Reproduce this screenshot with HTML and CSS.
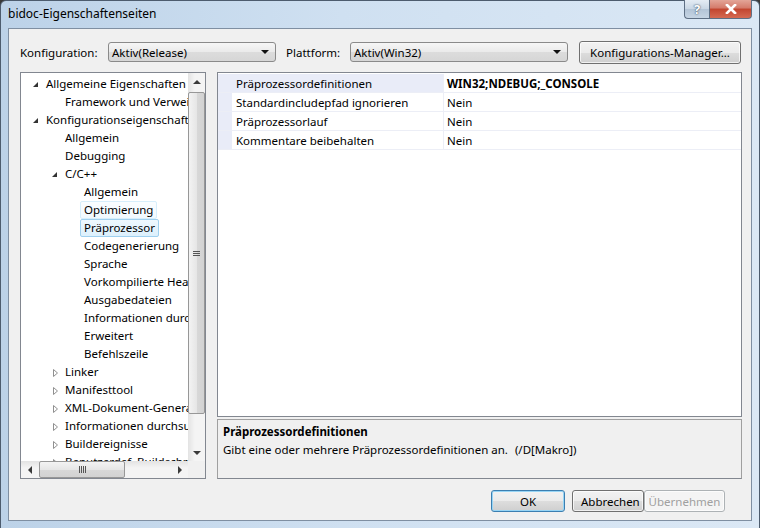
FILE: index.html
```html
<!DOCTYPE html>
<html lang="de">
<head>
    <meta charset="UTF-8">
    <title>bidoc-Eigenschaftenseiten</title>
    <link rel="stylesheet" href="styles.css">
</head>
<body>
    <div class="frame">
        <div class="titlebar">
            <span class="title">bidoc-Eigenschaftenseiten</span>
            <div class="caption-buttons">
                <div class="cap-btn cap-help">?</div>
                <div class="cap-btn cap-close">
                    <svg width="18" height="10" viewBox="0 0 18 10">
                        <path d="M5 1 L13 9 M13 1 L5 9" stroke="#fff" stroke-width="2.6" stroke-linecap="square"/>
                    </svg>
                </div>
            </div>
        </div>

        <div class="client">
            <div class="toolbar">
                <span class="tb-label label-config">Konfiguration:</span>
                <div class="combo combo-config">
                    <span>Aktiv(Release)</span>
                    <span class="combo-arrow"></span>
                </div>
                <span class="tb-label label-platform">Plattform:</span>
                <div class="combo combo-platform">
                    <span>Aktiv(Win32)</span>
                    <span class="combo-arrow"></span>
                </div>
                <div class="button btn-manager">Konfigurations-Manager...</div>
            </div>

            <div class="main">
                <div class="tree-box">
                    <div class="tree">
                        <div class="node lvl0"><span class="exp open"></span><span class="lbl">Allgemeine Eigenschaften</span></div>
                        <div class="node lvl1"><span class="exp"></span><span class="lbl">Framework und Verweise</span></div>
                        <div class="node lvl0"><span class="exp open"></span><span class="lbl">Konfigurationseigenschaften</span></div>
                        <div class="node lvl1"><span class="exp"></span><span class="lbl">Allgemein</span></div>
                        <div class="node lvl1"><span class="exp"></span><span class="lbl">Debugging</span></div>
                        <div class="node lvl1"><span class="exp open"></span><span class="lbl">C/C++</span></div>
                        <div class="node lvl2"><span class="exp"></span><span class="lbl">Allgemein</span></div>
                        <div class="node lvl2"><span class="exp"></span><span class="lbl hover">Optimierung</span></div>
                        <div class="node lvl2"><span class="exp"></span><span class="lbl selected">Präprozessor</span></div>
                        <div class="node lvl2"><span class="exp"></span><span class="lbl">Codegenerierung</span></div>
                        <div class="node lvl2"><span class="exp"></span><span class="lbl">Sprache</span></div>
                        <div class="node lvl2"><span class="exp"></span><span class="lbl">Vorkompilierte Header</span></div>
                        <div class="node lvl2"><span class="exp"></span><span class="lbl">Ausgabedateien</span></div>
                        <div class="node lvl2"><span class="exp"></span><span class="lbl">Informationen durchsuchen</span></div>
                        <div class="node lvl2"><span class="exp"></span><span class="lbl">Erweitert</span></div>
                        <div class="node lvl2"><span class="exp"></span><span class="lbl">Befehlszeile</span></div>
                        <div class="node lvl1"><span class="exp closed"></span><span class="lbl">Linker</span></div>
                        <div class="node lvl1"><span class="exp closed"></span><span class="lbl">Manifesttool</span></div>
                        <div class="node lvl1"><span class="exp closed"></span><span class="lbl">XML-Dokument-Generator</span></div>
                        <div class="node lvl1"><span class="exp closed"></span><span class="lbl">Informationen durchsuchen</span></div>
                        <div class="node lvl1"><span class="exp closed"></span><span class="lbl">Buildereignisse</span></div>
                        <div class="node lvl1"><span class="exp closed"></span><span class="lbl">Benutzerdef. Buildschritt</span></div>
                    </div>
                    <div class="vscroll">
                        <div class="sb-arrow arrow-up"></div>
                        <div class="sb-track-v">
                            <div class="thumb thumb-v"><span class="grip-v"></span></div>
                        </div>
                        <div class="sb-arrow arrow-down"></div>
                    </div>
                    <div class="hscroll">
                        <div class="sb-arrow arrow-left"></div>
                        <div class="sb-track-h">
                            <div class="thumb thumb-h"><span class="grip-h"></span></div>
                        </div>
                        <div class="sb-arrow arrow-right"></div>
                    </div>
                    <div class="sb-corner"></div>
                </div>

                <div class="props">
                    <div class="grid">
                        <div class="prop-row active">
                            <div class="margin"></div>
                            <div class="pname">Präprozessordefinitionen</div>
                            <div class="pvalue bold">WIN32;NDEBUG;_CONSOLE</div>
                        </div>
                        <div class="prop-row">
                            <div class="margin"></div>
                            <div class="pname">Standardincludepfad ignorieren</div>
                            <div class="pvalue">Nein</div>
                        </div>
                        <div class="prop-row">
                            <div class="margin"></div>
                            <div class="pname">Präprozessorlauf</div>
                            <div class="pvalue">Nein</div>
                        </div>
                        <div class="prop-row">
                            <div class="margin"></div>
                            <div class="pname">Kommentare beibehalten</div>
                            <div class="pvalue">Nein</div>
                        </div>
                    </div>
                    <div class="desc">
                        <div class="desc-title">Präprozessordefinitionen</div>
                        <div class="desc-text">Gibt eine oder mehrere Präprozessordefinitionen an.<span class="switch">(/D[Makro])</span></div>
                    </div>
                </div>
            </div>

            <div class="footer">
                <div class="button btn-ok">OK</div>
                <div class="button btn-cancel">Abbrechen</div>
                <div class="button btn-apply disabled">Übernehmen</div>
            </div>
        </div>
    </div>
</body>
</html>
```

FILE: styles.css
```css
body {
    margin: 0;
    font-family: 'Noto Sans', sans-serif;
    font-size: 11.5px;
    color: #000;
    background: #3a3a3a;
    overflow: hidden;
}

.frame {
    width: 758px;
    height: 527px;
    border: 1px solid #4d5c6e;
    border-radius: 6px 6px 0 0;
    background: linear-gradient(90deg, #bcd2e8 0%, #cfe0f1 45%, #dbe8f5 100%);
    position: relative;
}

.titlebar {
    height: 27px;
    display: flex;
    align-items: center;
    padding-left: 7px;
}

.title {
    font-size: 12px;
    color: #000;
    margin-top: -2px;
}

.caption-buttons {
    position: absolute;
    top: -1px;
    right: 7px;
    display: flex;
}

.cap-btn {
    height: 18px;
    border: 1px solid #5e6f84;
    border-top: none;
    display: flex;
    align-items: center;
    justify-content: center;
}

.cap-help {
    width: 24px;
    border-radius: 0 0 0 4px;
    border-right: none;
    background: linear-gradient(180deg, #e4ecf4 0%, #c9d6e4 50%, #b3c4d6 51%, #c6d5e4 100%);
    color: #fff;
    font-weight: bold;
    font-size: 13px;
    text-shadow: 0 0 2px #44576c, 0 0 1px #44576c;
}

.cap-close {
    width: 41px;
    border-radius: 0 0 4px 0;
    background: linear-gradient(180deg, #e3a598 0%, #d47a6a 45%, #c2452f 50%, #d56a52 100%);
}

.client {
    margin: 0 7px;
    border: 1px solid #7f8fa2;
    background: #f0f0f0;
    padding: 12px 0 0 11px;
    box-sizing: border-box;
    height: 493px;
}

/* toolbar */
.toolbar {
    display: flex;
    align-items: center;
    height: 22px;
}

.tb-label {
    display: inline-block;
}

.label-config { width: 88px; }

.label-platform {
    margin-left: 10px;
    width: 64px;
}

.combo {
    height: 20px;
    border: 1px solid #8a8a8a;
    border-radius: 3px;
    background: linear-gradient(180deg, #f6f6f6 0%, #eaeaea 50%, #dcdcdc 51%, #d6d6d6 100%);
    display: flex;
    align-items: center;
    justify-content: space-between;
    padding: 0 6px 0 3px;
    box-sizing: border-box;
}

.combo-config { width: 168px; }
.combo-platform { width: 218px; }

.combo-arrow {
    width: 0;
    height: 0;
    border-left: 4px solid transparent;
    border-right: 4px solid transparent;
    border-top: 4px solid #111;
}

.button {
    height: 22px;
    border: 1px solid #707070;
    border-radius: 3px;
    background: linear-gradient(180deg, #f2f2f2 0%, #ebebeb 50%, #dddddd 51%, #cfcfcf 100%);
    display: flex;
    align-items: center;
    justify-content: center;
    box-sizing: border-box;
    box-shadow: inset 0 0 0 1px rgba(255, 255, 255, 0.7);
}

.btn-manager {
    margin-left: 11px;
    width: 162px;
    height: 23px;
}

/* main area */
.main {
    display: flex;
    margin-top: 9px;
    height: 407px;
}

.tree-box {
    width: 186px;
    border: 1px solid #828790;
    background: #fff;
    box-sizing: border-box;
    display: grid;
    grid-template-columns: 1fr 17px;
    grid-template-rows: 1fr 17px;
}

.tree {
    overflow: hidden;
    padding-top: 2px;
    white-space: nowrap;
}

.node {
    height: 18px;
    display: flex;
    align-items: center;
}

.lvl0 { padding-left: 10px; }
.lvl1 { padding-left: 29px; }
.lvl2 { padding-left: 48px; }

.exp {
    width: 11px;
    height: 18px;
    flex: none;
    background-repeat: no-repeat;
    background-position: 0 center;
}

.exp.open {
    background-image: url("data:image/svg+xml,%3Csvg xmlns='http://www.w3.org/2000/svg' width='11' height='11'%3E%3Cpolygon points='7,3 7,8 2,8' fill='%23333'/%3E%3C/svg%3E");
}

.exp.closed {
    background-image: url("data:image/svg+xml,%3Csvg xmlns='http://www.w3.org/2000/svg' width='11' height='11'%3E%3Cpolygon points='3.5,2.5 7.5,6 3.5,9.5' fill='%23fff' stroke='%23909090'/%3E%3C/svg%3E");
}

.lbl {
    line-height: 16px;
    padding: 0 3px;
    border: 1px solid transparent;
    border-radius: 2px;
}

.lbl.hover {
    border-color: #d6eefb;
    background: linear-gradient(180deg, #fafdff 0%, #f1f9fe 100%);
}

.lbl.selected {
    border-color: #9fd0ef;
    background: linear-gradient(180deg, #eef8fe 0%, #dcf0fc 100%);
}

/* scrollbars */
.vscroll {
    background: linear-gradient(90deg, #e3e3e3, #f4f4f4 40%, #f4f4f4);
    display: flex;
    flex-direction: column;
}

.hscroll {
    background: linear-gradient(180deg, #e3e3e3, #f4f4f4 40%, #f4f4f4);
    display: flex;
}

.sb-corner { background: #f0f0f0; }

.sb-arrow {
    width: 17px;
    height: 17px;
    flex: none;
    display: flex;
    align-items: center;
    justify-content: center;
}

.arrow-up::after, .arrow-down::after, .arrow-left::after, .arrow-right::after {
    content: "";
    width: 0;
    height: 0;
}

.arrow-up::after {
    border-left: 4px solid transparent;
    border-right: 4px solid transparent;
    border-bottom: 4px solid #3a3a3a;
}

.arrow-down::after {
    border-left: 4px solid transparent;
    border-right: 4px solid transparent;
    border-top: 4px solid #3a3a3a;
}

.arrow-left::after {
    border-top: 4px solid transparent;
    border-bottom: 4px solid transparent;
    border-right: 4px solid #3a3a3a;
}

.arrow-right::after {
    border-top: 4px solid transparent;
    border-bottom: 4px solid transparent;
    border-left: 4px solid #3a3a3a;
}

.sb-track-v {
    flex: 1;
    padding: 2px 0 30px;
}

.sb-track-h {
    flex: 1;
    padding: 0 46px 0 1px;
}

.thumb {
    height: 100%;
    border: 1px solid #979797;
    border-radius: 2px;
    box-sizing: border-box;
    display: flex;
    align-items: center;
    justify-content: center;
}

.thumb-v {
    background: linear-gradient(90deg, #f3f3f3, #e6e6e6 50%, #d8d8d8 51%, #d2d2d2);
}

.thumb-h {
    background: linear-gradient(180deg, #f3f3f3, #e6e6e6 50%, #d8d8d8 51%, #d2d2d2);
}

.grip-v {
    width: 7px;
    height: 5px;
    background: repeating-linear-gradient(180deg, #555 0 1px, transparent 1px 2px);
}

.grip-h {
    width: 7px;
    height: 7px;
    background: repeating-linear-gradient(90deg, #555 0 1px, transparent 1px 2px);
}

/* property grid */
.props {
    width: 525px;
    margin-left: 11px;
    display: flex;
    flex-direction: column;
}

.grid {
    flex: 1;
    background: #fff;
    border: 1px solid #828790;
    padding-top: 1px;
}

.prop-row {
    display: flex;
    height: 19px;
    border-bottom: 1px solid #eceef6;
    box-sizing: border-box;
}

.prop-row .margin {
    width: 14px;
    background: #e9ecf8;
    flex: none;
}

.pname {
    width: 207px;
    padding-left: 4px;
    border-right: 1px solid #eceef6;
    line-height: 19px;
}

.prop-row.active .pname {
    background: #e9ecf8;
}

.pvalue {
    padding-left: 3px;
    line-height: 19px;
}

.bold { font-weight: bold; }

.desc {
    height: 60px;
    margin-top: 2px;
    border: 1px solid #a0a0a0;
    border-bottom-color: #828790;
    padding: 4px 5px;
    box-sizing: border-box;
}

.desc-title {
    font-weight: bold;
    line-height: 16px;
}

.desc-text {
    margin-top: 2px;
    line-height: 16px;
}

.switch { margin-left: 7px; }

/* dialog buttons */
.footer {
    display: flex;
    justify-content: flex-end;
    padding-right: 26px;
    margin-top: 11px;
}

.btn-ok {
    width: 74px;
    border-color: #3c7fb1;
    box-shadow: inset 0 0 0 1px #98d5f5;
    margin-right: 7px;
}

.btn-cancel {
    width: 72px;
    justify-content: flex-start;
    padding-left: 8px;
    overflow: hidden;
    white-space: nowrap;
}

.btn-apply {
    width: 81px;
    border-color: #adb2b5;
    background: #f4f4f4;
}

.disabled { color: #a0a0a0; }
```
